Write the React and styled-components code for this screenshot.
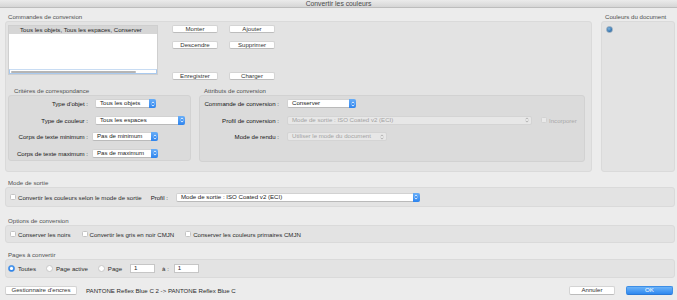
import React from "react";
import styled, { createGlobalStyle, css } from "styled-components";

const GlobalStyle = createGlobalStyle`
  html, body { margin: 0; padding: 0; background: #ececec; }
  body { font-family: "Liberation Sans", Arial, sans-serif; font-size: 6.1px; color: #2a2a2a; }
  * { box-sizing: border-box; }
`;

const Window = styled.div`
  width: 677px;
  height: 300px;
  display: flex;
  flex-direction: column;
  background: #ececec;
  overflow: hidden;
`;

const TitleBar = styled.div`
  height: 8px;
  flex: none;
  background: linear-gradient(#ebebeb, #d6d6d6);
  border-bottom: 1px solid #bdbdbd;
  color: #4a4a4a;
  font-size: 6.8px;
  line-height: 7px;
  text-align: center;
`;

const Body = styled.div`
  flex: 1;
  display: flex;
  flex-direction: column;
  padding: 5px 2px 0 5px;
`;

const TopRow = styled.div`
  display: flex;
  gap: 9px;
`;

const Section = styled.div`
  display: flex;
  flex-direction: column;
  flex: ${(p) => (p.$grow ? "1" : "none")};
  width: ${(p) => (p.$w ? `${p.$w}px` : "auto")};
  margin-top: ${(p) => p.$mt || 0}px;
`;

const SectionLabel = styled.div`
  height: 8px;
  line-height: 8px;
  padding-left: ${(p) => p.$indent ?? 3}px;
  color: #505050;
  white-space: nowrap;
`;

const Group = styled.div`
  background: ${(p) => (p.$inner ? "#dbdbdb" : "#e3e3e3")};
  border: 1px solid ${(p) => (p.$inner ? "#d2d2d2" : "#dadada")};
  border-radius: 3px;
  height: ${(p) => p.$h}px;
`;

const MainGroup = styled(Group)`
  padding: 3px 6px 0 2px;
  display: flex;
  flex-direction: column;
`;

const CmdArea = styled.div`
  display: flex;
  align-items: flex-start;
`;

const ListBox = styled.div`
  width: 150px;
  height: 50px;
  background: #fff;
  border: 1px solid #cfcfcf;
  display: flex;
  flex-direction: column;
`;

const ListRow = styled.div`
  height: 8px;
  line-height: 8px;
  background: #d6d6d6;
  color: #1e1e1e;
  text-align: center;
  padding-right: 4px;
`;

const ListSpacer = styled.div`
  flex: 1;
`;

const HScroll = styled.div`
  height: 5px;
  border: 1px solid #a9c9ee;
  border-top-color: #c8dcf3;
  padding: 1px 20px 0 1px;
`;

const Thumb = styled.div`
  height: 2px;
  border-radius: 1px;
  background: #b5b5b5;
`;

const ButtonGrid = styled.div`
  margin-left: 14px;
  height: 55px;
  display: grid;
  grid-template-columns: 46px 46px;
  grid-template-rows: 8px 8px 1fr 8px;
  column-gap: 11px;
  row-gap: 8px;
`;

const PushButton = styled.div`
  grid-row: ${(p) => p.$row || "auto"};
  width: ${(p) => (p.$w ? `${p.$w}px` : "auto")};
  height: ${(p) => p.$h || 8}px;
  margin-left: ${(p) => p.$ml || 0}px;
  display: flex;
  align-items: center;
  justify-content: center;
  line-height: 1;
  background: ${(p) => (p.$primary ? "linear-gradient(#6cb3f8, #2f88f0)" : "#fff")};
  color: ${(p) => (p.$primary ? "#fff" : "#333")};
  border: 1px solid ${(p) => (p.$primary ? "#3d8ee6" : "#d4d4d4")};
  border-bottom-color: ${(p) => (p.$primary ? "#2a78d6" : "#bcbcbc")};
  border-radius: 2px;
  white-space: nowrap;
  flex: none;
`;

const SubRow = styled.div`
  display: flex;
  gap: 8px;
  margin-top: 7px;
`;

const FormGrid = styled.div`
  display: grid;
  grid-template-columns: 79px auto;
  grid-auto-rows: 9px;
  row-gap: ${(p) => p.$rg}px;
  column-gap: ${(p) => p.$cg}px;
  padding-top: 3px;
  align-items: center;
`;

const FieldLabel = styled.div`
  text-align: right;
  color: #161616;
  white-space: nowrap;
`;

const FieldCell = styled.div`
  display: flex;
  align-items: center;
  padding-left: ${(p) => p.$offset || 0}px;
  height: 9px;
`;

const SelectBox = styled.div`
  width: ${(p) => p.$w}px;
  height: ${(p) => p.$h || 9}px;
  display: flex;
  align-items: stretch;
  border-radius: 2px;
  flex: none;
  ${(p) =>
    p.$disabled
      ? css`
          background: #e7e7e7;
          border: 1px solid #d4d4d4;
          color: #a3a3a3;
        `
      : css`
          background: #fff;
          border: 1px solid #d2d2d2;
          border-bottom-color: #bababa;
          color: #222;
        `}
`;

const SelectText = styled.div`
  flex: 1;
  padding-left: 4px;
  display: flex;
  align-items: center;
  line-height: 1;
  white-space: nowrap;
  overflow: hidden;
`;

const ArrowBtn = styled.div`
  width: 7px;
  flex: none;
  margin: -1px -1px -1px 0;
  border-radius: 0 2px 2px 0;
  background: linear-gradient(#68aef8, #2e84ee);
  display: flex;
  align-items: center;
  justify-content: center;
`;

const GrayArrow = styled.div`
  width: 8px;
  flex: none;
  display: flex;
  align-items: center;
  justify-content: center;
`;

const Chevrons = ({ color }) => (
  <svg width="4" height="6" viewBox="0 0 4 6">
    <path d="M0.6 2.3 L2 0.9 L3.4 2.3 M0.6 3.7 L2 5.1 L3.4 3.7" fill="none" stroke={color} strokeWidth="0.8" />
  </svg>
);

const Select = ({ w, text, disabled, h }) => (
  <SelectBox $w={w} $disabled={disabled} $h={h}>
    <SelectText>{text}</SelectText>
    {disabled ? (
      <GrayArrow>
        <Chevrons color="#a8a8a8" />
      </GrayArrow>
    ) : (
      <ArrowBtn>
        <Chevrons color="#ffffff" />
      </ArrowBtn>
    )}
  </SelectBox>
);

const CheckBox = styled.span`
  width: 6px;
  height: 6px;
  flex: none;
  border-radius: 1.5px;
  background: ${(p) => (p.$disabled ? "#e9e9e9" : "#fff")};
  border: 1px solid ${(p) => (p.$disabled ? "#d2d2d2" : "#c4c4c4")};
`;

const Check = styled.label`
  display: flex;
  align-items: center;
  gap: ${(p) => p.$gap ?? 2}px;
  margin-left: ${(p) => p.$ml || 0}px;
  color: ${(p) => (p.$disabled ? "#a9a9a9" : "#2a2a2a")};
  white-space: nowrap;
`;

const InlineRow = styled.div`
  height: 100%;
  display: flex;
  align-items: center;
  padding-left: ${(p) => p.$pl ?? 4}px;
`;

const Plain = styled.span`
  margin-left: ${(p) => p.$ml || 0}px;
  color: ${(p) => (p.$strong ? "#161616" : "#2a2a2a")};
  white-space: nowrap;
`;

const SelectWrap = styled.div`
  margin-left: ${(p) => p.$ml || 0}px;
  display: flex;
`;

const Radio = styled.span`
  width: 7px;
  height: 7px;
  flex: none;
  border-radius: 50%;
  display: flex;
  align-items: center;
  justify-content: center;
  ${(p) =>
    p.$on
      ? css`
          background: linear-gradient(#5aa6f7, #2b82ee);
          border: 1px solid #3a88e2;
          &::after {
            content: "";
            width: 2.4px;
            height: 2.4px;
            border-radius: 50%;
            background: #fff;
          }
        `
      : css`
          background: #fff;
          border: 1px solid #c8c8c8;
        `}
`;

const TextInput = styled.div`
  width: ${(p) => p.$w}px;
  height: 9px;
  margin-left: ${(p) => p.$ml || 0}px;
  background: #fff;
  border: 1px solid #c6c6c6;
  display: flex;
  align-items: center;
  line-height: 1;
  padding-left: 3px;
  flex: none;
`;

const SideGroup = styled(Group)`
  padding: 4px 0 0 4px;
`;

const SpotDot = styled.span`
  display: block;
  width: 7px;
  height: 7px;
  border-radius: 50%;
  background: radial-gradient(circle at 40% 35%, #7fb2dc 0%, #3f7fb8 55%, #2b5f92 100%);
  border: 1px solid #8fa7bd;
`;

const BottomBar = styled.div`
  margin-top: 8px;
  padding-right: 2px;
  display: flex;
  align-items: center;
  height: 9px;
`;

const Spacer = styled.div`
  flex: 1;
`;

export default function App() {
  return (
    <Window>
      <GlobalStyle />
      <TitleBar>Convertir les couleurs</TitleBar>
      <Body>
        <TopRow>
          <Section $w={587}>
            <SectionLabel>Commandes de conversion</SectionLabel>
            <MainGroup $h={151}>
              <CmdArea>
                <ListBox>
                  <ListRow>Tous les objets, Tous les espaces, Conserver</ListRow>
                  <ListSpacer />
                  <HScroll>
                    <Thumb />
                  </HScroll>
                </ListBox>
                <ButtonGrid>
                  <PushButton $row={1}>Monter</PushButton>
                  <PushButton $row={1}>Ajouter</PushButton>
                  <PushButton $row={2}>Descendre</PushButton>
                  <PushButton $row={2}>Supprimer</PushButton>
                  <PushButton $row={4}>Enregistrer</PushButton>
                  <PushButton $row={4}>Charger</PushButton>
                </ButtonGrid>
              </CmdArea>
              <SubRow>
                <Section $w={183}>
                  <SectionLabel $indent={6}>Critères de correspondance</SectionLabel>
                  <Group $inner $h={66}>
                    <FormGrid $rg={7.5} $cg={4}>
                      <FieldLabel>Type d'objet :</FieldLabel>
                      <FieldCell $offset={3}>
                        <Select w={61} text="Tous les objets" />
                      </FieldCell>
                      <FieldLabel>Type de couleur :</FieldLabel>
                      <FieldCell $offset={3}>
                        <Select w={90} text="Tous les espaces" />
                      </FieldCell>
                      <FieldLabel>Corps de texte minimum :</FieldLabel>
                      <FieldCell>
                        <Select w={66} text="Pas de minimum" />
                      </FieldCell>
                      <FieldLabel>Corps de texte maximum :</FieldLabel>
                      <FieldCell>
                        <Select w={66} text="Pas de maximum" />
                      </FieldCell>
                    </FormGrid>
                  </Group>
                </Section>
                <Section $w={386}>
                  <SectionLabel $indent={5}>Attributs de conversion</SectionLabel>
                  <Group $inner $h={67}>
                    <FormGrid $rg={7.5} $cg={8}>
                      <FieldLabel>Commande de conversion :</FieldLabel>
                      <FieldCell>
                        <Select w={69} text="Conserver" />
                      </FieldCell>
                      <FieldLabel>Profil de conversion :</FieldLabel>
                      <FieldCell>
                        <Select w={245} text="Mode de sortie : ISO Coated v2 (ECI)" disabled />
                        <Check $ml={9} $gap={2} $disabled>
                          <CheckBox $disabled />
                          Incorporer
                        </Check>
                      </FieldCell>
                      <FieldLabel>Mode de rendu :</FieldLabel>
                      <FieldCell>
                        <Select w={100} text="Utiliser le mode du document" disabled />
                      </FieldCell>
                    </FormGrid>
                  </Group>
                </Section>
              </SubRow>
            </MainGroup>
          </Section>
          <Section $grow>
            <SectionLabel $indent={4}>Couleurs du document</SectionLabel>
            <SideGroup $h={151}>
              <SpotDot />
            </SideGroup>
          </Section>
        </TopRow>

        <Section $mt={7}>
          <SectionLabel>Mode de sortie</SectionLabel>
          <Group $h={20}>
            <InlineRow>
              <Check>
                <CheckBox />
                Convertir les couleurs selon le mode de sortie
              </Check>
              <Plain $ml={9} $strong>
                Profil :
              </Plain>
              <SelectWrap $ml={8}>
                <Select w={244} text="Mode de sortie : ISO Coated v2 (ECI)" />
              </SelectWrap>
            </InlineRow>
          </Group>
        </Section>

        <Section $mt={10}>
          <SectionLabel>Options de conversion</SectionLabel>
          <Group $h={18}>
            <InlineRow>
              <Check>
                <CheckBox />
                Conserver les noirs
              </Check>
              <Check $ml={11}>
                <CheckBox />
                Convertir les gris en noir CMJN
              </Check>
              <Check $ml={11}>
                <CheckBox />
                Conserver les couleurs primaires CMJN
              </Check>
            </InlineRow>
          </Group>
        </Section>

        <Section $mt={8}>
          <SectionLabel>Pages à convertir</SectionLabel>
          <Group $h={19}>
            <InlineRow $pl={2}>
              <Check $gap={3}>
                <Radio $on />
                Toutes
              </Check>
              <Check $gap={3} $ml={10}>
                <Radio />
                Page active
              </Check>
              <Check $gap={3} $ml={10}>
                <Radio />
                Page
              </Check>
              <TextInput $w={25} $ml={8}>1</TextInput>
              <Plain $ml={7}>à :</Plain>
              <TextInput $w={25} $ml={5}>1</TextInput>
            </InlineRow>
          </Group>
        </Section>

        <BottomBar>
          <PushButton $w={72} $h={9}>Gestionnaire d'encres</PushButton>
          <Plain $ml={9}>PANTONE Reflex Blue C 2 -&gt; PANTONE Reflex Blue C</Plain>
          <Spacer />
          <PushButton $w={46} $h={9}>Annuler</PushButton>
          <PushButton $w={47} $h={9} $ml={11} $primary>
            OK
          </PushButton>
        </BottomBar>
      </Body>
    </Window>
  );
}
